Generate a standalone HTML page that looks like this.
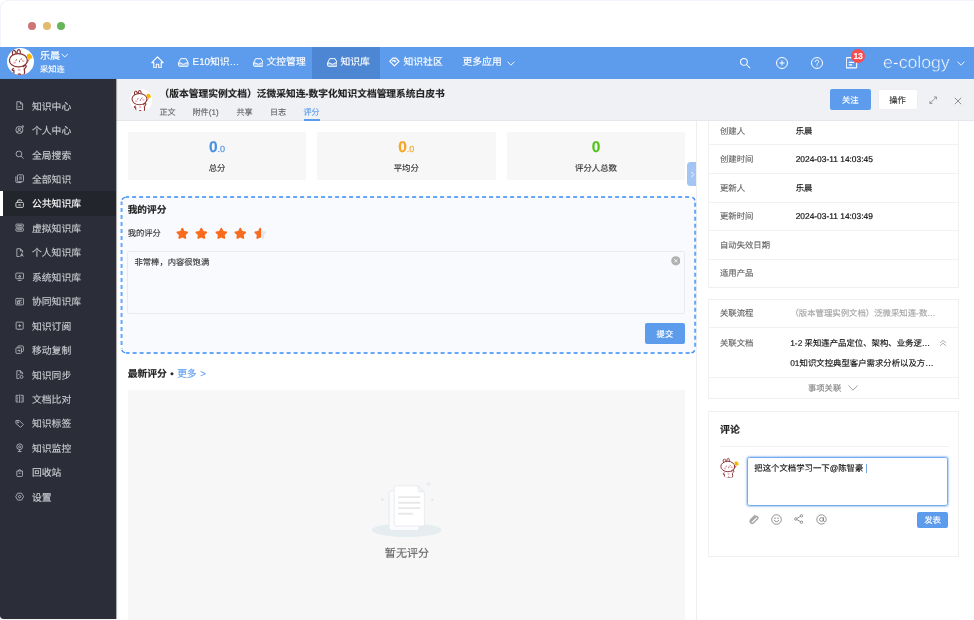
<!DOCTYPE html>
<html lang="zh-CN">
<head>
<meta charset="utf-8">
<title>知识库 - 评分</title>
<style>
*{box-sizing:border-box;margin:0;padding:0}
html,body{width:974px;height:620px;overflow:hidden;background:#fff}
body{text-rendering:geometricPrecision;-webkit-text-stroke:.14px;font-family:"Liberation Sans","Noto Sans CJK SC",sans-serif;color:#333;position:relative;font-size:8.3px;line-height:1}
.abs{position:absolute}
.t{position:absolute;white-space:nowrap;line-height:12px;height:12px;margin-top:-6px}
/* window dots */
.dot{position:absolute;width:8px;height:8px;border-radius:50%;top:21.5px}
/* header */
#hdr{position:absolute;left:0;top:47px;width:974px;height:32px;background:#5d9cec}
#hdr .t{color:#fff;font-size:9.8px}
#hdr .act{position:absolute;left:312px;top:0;width:68px;height:32px;background:#4d86d3}
/* sidebar */
#side{z-index:6;position:absolute;left:0;top:79px;width:115.6px;box-shadow:.6px 0 1px rgba(0,0,0,.35);height:540px;background:#2b2e38;border-bottom-left-radius:4px}
#side .it{position:absolute;left:0;width:116px;height:24.5px;color:#c9cbd1;font-size:9.8px}
#side .it .t{left:32px;top:14.4px}
#side .it svg{position:absolute;left:14.7px;top:7.7px;width:9.3px;height:9.3px;stroke:#c3c5cc;fill:none;stroke-width:.85}
#side .it.on{background:#23252d;color:#fff}
#side .it.on:before{content:"";position:absolute;left:0;top:0;width:3px;height:100%;background:#fff}
#side .it.on svg{stroke:#fff}
/* title bar */
#tb{z-index:5;position:absolute;left:116px;top:79px;width:858px;height:41.5px;background:#f0f1f5;border-bottom:1px solid #e6e7ec}
/* main */
.stat{position:absolute;top:132px;height:47.5px;background:#f7f7f7;border-radius:1px}
.stat .n{position:absolute;left:0;width:100%;top:7.4px;text-align:center;font-weight:bold;font-size:15.5px;line-height:18px}
.stat .n small{font-size:9px;font-weight:normal}
.stat .l{position:absolute;left:0;width:100%;top:30px;text-align:center;font-size:8.4px;line-height:12px;color:#333}
.card{position:absolute;left:708px;width:251px;background:#fff;border:1px solid #f0f0f0}
.lbl{color:#666;font-size:8.35px}
.val{color:#111;font-size:8.38px}
.num{-webkit-text-stroke:.2px #111}
.sep{position:absolute;height:1px;background:#f2f2f2}
</style>
</head>
<body>
<div id="app" style="position:absolute;left:0;top:0;width:974px;height:620px;will-change:transform">
<svg width="0" height="0" style="position:absolute"><defs><symbol id="bun" viewBox="0 0 27 27">
<clipPath id="bc"><circle cx="13.5" cy="13.5" r="13.5"/></clipPath><circle cx="13.5" cy="13.5" r="13.5" fill="#fff"/>
<g clip-path="url(#bc)"><g transform="translate(.4 .9)">
<g fill="#fff" stroke="#8a3434" stroke-width="1.25" stroke-linecap="round" stroke-linejoin="round">
<path d="M6.200 19.600c-.9.300-1.500.800-1.400 1.400.1.600.9.700 1.800.5-.2 1.600-.100 3 .300 4.300.900.500 2.500.600 3.800.200.300-.700.700-1 1.200-1 .500 0 .900.300 1.200 1 1.300.400 2.800.300 3.700-.300.500-1.700.500-3.600 0-5.600 1-.700 1.700-1.700 2.100-2.800l-1.200-1.300c-.500.900-1.100 1.500-1.900 1.900"/>
<path d="M5.600 6.600C4.600 4.200 4.900 1.900 6.200 1.600 7.500 1.300 8.500 3.200 8.900 5.300"/>
<path d="M9.600 5.100C9.400 2.800 10.200 .8 11.500 .8c1.300 0 1.700 2.200 1.300 4.500"/>
<ellipse cx="11" cy="11.300" rx="9" ry="6.700"/>
</g>
<path d="M17.600 16.700L21.900 10.300" stroke="#8a3434" stroke-width=".7" fill="none"/>
<path d="M20 5.300c1.500-1.100 3.400-.500 4.100 1l1 2.700-4.400 1.500-.9-2.400c-.4-1-.4-2.100.2-2.800z" fill="#f6b800"/>
<ellipse cx="7.200" cy="13.800" rx="1.500" ry="1.100" fill="#f9b4bb"/>
<ellipse cx="15.800" cy="12.200" rx="1.500" ry="1.100" fill="#f9b4bb"/>
<ellipse cx="11.800" cy="20.900" rx="1.300" ry="1.300" fill="#f9b4bb"/>
<path d="M8.500 11.300l.8-.4M13.400 10.500l.8-.5M12.100 12v.9" stroke="#8a3434" stroke-width=".9" stroke-linecap="round" fill="none"/>
</g>
</g>
</symbol>
<symbol id="inb" viewBox="0 0 11 9"><path d="M.6 5.100h2.700a2.300 1.700 0 0 0 4.400 0h2.700v2.300a1 1 0 0 1-1 1H1.600a1 1 0 0 1-1-1z" fill="#fff" fill-opacity=".35" stroke="none"/><path d="M2.700 .6h5.600l2.100 4.300v2.500a1 1 0 0 1-1 1H1.600a1 1 0 0 1-1-1V4.900z M.6 5h2.700a2.300 1.700 0 0 0 4.400 0h2.700" fill="none" stroke="#fff" stroke-width="1" stroke-linejoin="round"/></symbol>
<symbol id="star" viewBox="0 0 12 12"><path d="M6 .7c.35 0 .6.2.75.5l1.250 2.600 2.850.4c.7.1 1 .9.450 1.400L9.250 7.600l.5 2.850c.1.700-.6 1.200-1.200.850L6 9.950l-2.550 1.350c-.6.350-1.300-.150-1.200-.850l.5-2.850L.7 5.600c-.55-.5-.25-1.300.450-1.400L4 3.800 5.250 1.200C5.400.9 5.650.7 6 .7z"/></symbol>
</defs></svg>
<!-- window chrome -->
<div class="abs" style="left:0;top:0;width:974px;height:620px;border:1px solid #f1f4fb;border-right:0;border-bottom:0;border-radius:8px 0 0 0"></div>
<div class="dot" style="left:28px;background:#cd7476"></div>
<div class="dot" style="left:42.7px;background:#e0bb6b"></div>
<div class="dot" style="left:57.4px;background:#66b556"></div>

<!-- header -->
<div id="hdr">
  <div class="act"></div>
  <svg class="abs" style="left:7.1px;top:1.4px;width:27px;height:27px"><use href="#bun"/></svg>
  <svg class="abs" style="left:60.8px;top:5.5px;width:7.5px;height:5px" viewBox="0 0 7.500 5" fill="none" stroke="#fff" stroke-width=".9"><path d="M.5 .7L3.750 4.100 7 .7"/></svg>
  <svg class="abs" style="left:150.9px;top:8.500px;width:13px;height:12.500px" viewBox="0 0 13 12.500" fill="none" stroke="#fff" stroke-width="1.100" stroke-linejoin="round"><path d="M6.500 .8L.8 6.600H2.800V11.800H5.300V8.300H7.700V11.800H10.200V6.600H12.200Z"/></svg>
  <svg class="abs" style="left:177.800px;top:10.700px;width:10.800px;height:9px"><use href="#inb"/></svg>
  <svg class="abs" style="left:252.500px;top:10.700px;width:10.800px;height:9px"><use href="#inb"/></svg>
  <svg class="abs" style="left:326.500px;top:10.700px;width:10.800px;height:9px"><use href="#inb"/></svg>
  <svg class="abs" style="left:388.800px;top:10.300px;width:10.800px;height:9.600px" viewBox="0 0 11 10" fill="none" stroke="#fff" stroke-width="1.25" stroke-linejoin="round"><path d="M5.500 9.300L.7 4.500 3.900 1.200h3.200l3.200 3.300z"/><path d="M3.600 4.600a1.100 1.100 0 1 1 1.900.8M5.500 5.400l1.600-1.500"/></svg>
  <svg class="abs" style="left:506.500px;top:13.500px;width:8px;height:5px" viewBox="0 0 8 5" fill="none" stroke="#fff" stroke-width=".9"><path d="M.6 .7L4 4.200 7.400 .7"/></svg>
  <svg class="abs" style="left:738px;top:8.500px;width:14px;height:14px" viewBox="0 0 14 14" fill="none" stroke="#fff" stroke-width="1.05" stroke-linecap="round"><circle cx="5.900" cy="5.900" r="3.400"/><path d="M8.500 8.500L11.800 11.800"/></svg>
  <svg class="abs" style="left:775px;top:8.500px;width:14px;height:14px" viewBox="0 0 14 14" fill="none" stroke="#fff" stroke-width="1"><circle cx="7" cy="7" r="5.500"/><path d="M7 4.500v5M4.500 7h5"/></svg>
  <svg class="abs" style="left:810px;top:8.500px;width:14px;height:14px" viewBox="0 0 14 14" fill="none" stroke="#fff" stroke-width="1"><circle cx="7" cy="7" r="5.500"/><path d="M5.300 5.700a1.700 1.700 0 1 1 2.600 1.400c-.6.400-.9.700-.9 1.400" stroke-linecap="round"/><circle cx="7" cy="10" r=".6" fill="#fff" stroke="none"/></svg>
  <svg class="abs" style="left:846px;top:10px;width:12px;height:11.500px" viewBox="0 0 12 11.500" fill="none" stroke="#fff" stroke-width="1.100" stroke-linejoin="round"><path d="M1.300 .6H7.500L10.700 3.300V9.900a1 1 0 0 1-1 1H1.300a1 1 0 0 1-1-1V1.600a1 1 0 0 1 1-1z"/><path d="M2.800 5.400h5.400M2.800 7.900h3.400"/></svg>
  <div class="abs" style="left:850.700px;top:1.600px;width:14.600px;height:14.400px;border-radius:50%;background:#f74d4f"></div>
  <div class="t" style="left:850.700px;width:14.600px;text-align:center;top:8.900px;font-size:8.6px;font-weight:bold;letter-spacing:-.3px">13</div>
  <svg class="abs" style="left:956.500px;top:13.500px;width:8px;height:5px" viewBox="0 0 8 5" fill="none" stroke="#fff" stroke-width=".9"><path d="M.6 .7L4 4.200 7.400 .7"/></svg>
  <div class="t" style="left:40px;top:9.7px;font-size:10px">乐晨</div>
  <div class="t" style="left:40px;top:23.2px;font-size:8.2px">采知连</div>
  <div class="t" style="left:192.6px;top:15.6px">E10知识…</div>
  <div class="t" style="left:266.5px;top:15.6px">文控管理</div>
  <div class="t" style="left:340.5px;top:15.6px">知识库</div>
  <div class="t" style="left:403.5px;top:15.6px">知识社区</div>
  <div class="t" style="left:462.5px;top:15.6px">更多应用</div>
  <div class="t" style="left:883.3px;top:15.8px;font-size:17px;line-height:20px;height:20px;margin-top:-10px;font-weight:normal;letter-spacing:-.12px;transform:scaleX(1.052);transform-origin:0 50%;-webkit-text-stroke:.5px #5d9cec;paint-order:fill stroke">e-cology</div>
</div>

<!-- sidebar -->
<div id="side">
  <div class="it" style="top:14.25px"><svg viewBox="0 0 10 10"><path d="M2 .8h3.8L8.2 3.2v6H2z"/><path d="M5.8 .8v2.4h2.4"/><path d="M3.6 6.2h2.4"/></svg><div class="t">知识中心</div></div>
  <div class="it" style="top:38.70px"><svg viewBox="0 0 10 10"><circle cx="4.7" cy="5.3" r="3.8"/><circle cx="4.7" cy="4.4" r="1.2"/><path d="M2.2 8a2.6 2.6 0 0 1 5 0"/><circle cx="8.4" cy="1.6" r=".9"/></svg><div class="t">个人中心</div></div>
  <div class="it" style="top:63.15px"><svg viewBox="0 0 10 10"><circle cx="4.2" cy="4.2" r="3.1"/><path d="M6.5 6.5L9.2 9.2"/></svg><div class="t">全局搜索</div></div>
  <div class="it" style="top:87.60px"><svg viewBox="0 0 10 10"><rect x="2.6" y=".9" width="6.5" height="7.3" rx="1"/><path d="M.9 2.6v5.6a1 1 0 0 0 1 1h5"/><path d="M4.4 3.4h3M4.4 5.4h3"/></svg><div class="t">全部知识</div></div>
  <div class="it on" style="top:112.05px"><svg viewBox="0 0 10 10"><rect x="1" y="3.6" width="8" height="5.4" rx="1"/><path d="M2.8 3.6V2.2a1.2 1.2 0 0 1 1.2-1.2h2a1.2 1.2 0 0 1 1.2 1.2"/><path d="M3.4 6.4h3.2"/></svg><div class="t">公共知识库</div></div>
  <div class="it" style="top:136.50px"><svg viewBox="0 0 10 10"><rect x="1" y="1.2" width="8" height="3.2" rx=".8"/><rect x="1" y="5.6" width="8" height="3.2" rx=".8"/><path d="M2.5 2.8h5M2.5 7.2h5"/></svg><div class="t">虚拟知识库</div></div>
  <div class="it" style="top:160.95px"><svg viewBox="0 0 10 10"><path d="M5 9.2H2V.8h3.8L8.2 3.2V5"/><path d="M5.8 .8v2.4h2.4"/><path d="M5.8 9.2L7.3 5.8 8.8 9.2M6.3 8.2h2"/></svg><div class="t">个人知识库</div></div>
  <div class="it" style="top:185.40px"><svg viewBox="0 0 10 10"><rect x=".9" y="1.2" width="8.2" height="6" rx=".6"/><path d="M3 9.2h4"/><path d="M5 3.2L6.3 5.4H3.7z"/></svg><div class="t">系统知识库</div></div>
  <div class="it" style="top:209.85px"><svg viewBox="0 0 10 10"><rect x=".9" y="1.5" width="8.2" height="7" rx=".7"/><path d="M2.8 3.6h4.6"/><rect x="2.8" y="5" width="2.4" height="1.8"/><path d="M6.6 6.2h.9"/></svg><div class="t">协同知识库</div></div>
  <div class="it" style="top:234.30px"><svg viewBox="0 0 10 10"><rect x="1.2" y="1.2" width="7.6" height="7.6" rx=".7"/><path d="M5 3.4v3.2M3.4 5h3.2"/><path d="M4 8.8v.6M6 8.8v.6"/></svg><div class="t">知识订阅</div></div>
  <div class="it" style="top:258.75px"><svg viewBox="0 0 10 10"><rect x="1" y="3" width="6" height="6" rx=".9"/><path d="M3 3V1.9a.9.9 0 0 1 .9-.9h4.2a.9.9 0 0 1 .9.9v4.2a.9.9 0 0 1-.9.9H7"/><path d="M2.8 6h2.6M4.4 4.9L5.5 6 4.4 7.1"/></svg><div class="t">移动复制</div></div>
  <div class="it" style="top:283.20px"><svg viewBox="0 0 10 10"><path d="M4.6 9.2H2V.8h3.8L8.2 3.2V4.6"/><path d="M5.8 .8v2.4h2.4"/><circle cx="7" cy="7.4" r="1.6"/><path d="M3.4 5h1.6"/></svg><div class="t">知识同步</div></div>
  <div class="it" style="top:307.65px"><svg viewBox="0 0 10 10"><path d="M3.8 1.4H1.2v7.2h2.6M6.2 1.4h2.6v7.2H6.2M5 .4v9.2"/><path d="M2.2 3.4h1M2.2 5h1M2.2 6.6h1M7 3.4h1M7 5h1M7 6.6h1" stroke-width=".8"/></svg><div class="t">文档比对</div></div>
  <div class="it" style="top:332.10px"><svg viewBox="0 0 10 10"><path d="M1 1.6h3.6L9 6 6 9 1 4.8z"/><circle cx="3.2" cy="3.6" r=".7"/></svg><div class="t">知识标签</div></div>
  <div class="it" style="top:356.55px"><svg viewBox="0 0 10 10"><circle cx="5" cy="4" r="3.1"/><circle cx="5" cy="4" r="1.1"/><path d="M5 7.1v2.1M3 9.2h4"/></svg><div class="t">知识监控</div></div>
  <div class="it" style="top:381.00px"><svg viewBox="0 0 10 10"><path d="M2 3.2h6v5a1 1 0 0 1-1 1H3a1 1 0 0 1-1-1z"/><path d="M3.6 3.2a1.4 1.4 0 0 1 2.8 0"/><path d="M4 5.6h2"/></svg><div class="t">回收站</div></div>
  <div class="it" style="top:405.45px"><svg viewBox="0 0 10 10"><path d="M.8 5L2.9 1.3h4.2L9.2 5 7.1 8.7H2.9z"/><circle cx="5" cy="5" r="1.3"/></svg><div class="t">设置</div></div>
</div>

<!-- title bar -->
<div id="tb">
  <svg class="abs" style="left:14.1px;top:9.800px;width:22.4px;height:22.4px"><use href="#bun"/></svg>
  <svg class="abs" style="left:813.2px;top:17.300px;width:8.4px;height:8.4px" viewBox="0 0 9 9" fill="none" stroke="#777" stroke-width=".75"><path d="M1 8L8 1M5.300 1H8v2.700M1 5.300V8h2.700"/></svg>
  <svg class="abs" style="left:838.200px;top:17.500px;width:8px;height:8px" viewBox="0 0 8 8" fill="none" stroke="#777" stroke-width=".8"><path d="M.8 .8L7.200 7.200M7.200 .8L.8 7.200"/></svg>
  <div class="t" style="left:43.6px;top:16px;font-size:9.73px;font-weight:bold;color:#222">（版本管理实例文档）泛微采知连-数字化知识文档管理系统白皮书</div>
  <div class="t" style="left:43.5px;top:34px;font-size:8.1px;color:#666">正文</div>
  <div class="t" style="left:76.5px;top:34px;font-size:8.1px;color:#666">附件(1)</div>
  <div class="t" style="left:120.5px;top:34px;font-size:8.1px;color:#666">共享</div>
  <div class="t" style="left:154px;top:34px;font-size:8.1px;color:#666">日志</div>
  <div class="t" style="left:187.5px;top:34px;font-size:8.1px;color:#5d9cec">评分</div>
  <div class="abs" style="left:187.5px;top:40.4px;width:16.5px;height:1.6px;background:#5d9cec"></div>
  <div class="abs" style="left:714px;top:10.2px;width:40.5px;height:21px;background:#5d9cec;border-radius:2px"></div>
  <div class="t" style="left:714px;width:40.5px;text-align:center;top:20.8px;color:#fff;font-size:8.3px">关注</div>
  <div class="abs" style="left:761.5px;top:10.2px;width:40px;height:21px;background:#fff;border:1px solid #eceef2;border-radius:2px"></div>
  <div class="t" style="left:761.5px;width:40px;text-align:center;top:20.8px;color:#333;font-size:8.3px">操作</div>
</div>

<!-- main left -->
<div class="abs" style="left:696px;top:121px;width:1px;height:499px;background:#efefef"></div>
<div class="stat" style="left:128px;width:178px"><div class="n" style="color:#4a90e2">0<small>.0</small></div><div class="l">总分</div></div>
<div class="stat" style="left:317px;width:178.5px"><div class="n" style="color:#f5a623">0<small>.0</small></div><div class="l">平均分</div></div>
<div class="stat" style="left:507px;width:178px"><div class="n" style="color:#52c41a">0</div><div class="l">评分人总数</div></div>

<div class="abs" style="left:687px;top:162.2px;width:9.2px;height:23.8px;background:#a3c5f3;border-radius:3.5px 0 0 3.5px"></div>

<svg class="abs" style="left:119.5px;top:195px;width:577px;height:160px" viewBox="119.5 195 577 160" fill="none">
<rect x="121.05" y="197.06" width="573.60" height="155.94" rx="4.5" fill="#f9fafd"/>
<g stroke="#65a8f8" stroke-width="2" stroke-dasharray="4 3">
<path d="M125.55 197.06H690.15" stroke-dashoffset=".95"/>
<path d="M125.55 353.0H690.15" stroke-dashoffset=".45"/>
<path d="M121.05 201.56V348.5" stroke-dashoffset=".53"/>
<path d="M694.65 201.56V348.5" stroke-dashoffset="5.86"/>
</g>
<g stroke="#3f8aec" stroke-width="1.400">
<path d="M121.47 199.66A4.5 4.5 0 0 1 125.16 197.08"/>
<path d="M691.84 197.39A4.5 4.5 0 0 1 694.50 200.40"/>
<path d="M694.23 350.40A4.5 4.5 0 0 1 690.93 352.93"/>
<path d="M124.77 352.93A4.5 4.5 0 0 1 121.32 350.04"/>
</g>
</svg>
<div class="t" style="left:127.7px;top:210.5px;font-size:9.7px;font-weight:bold;color:#222">我的评分</div>
<div class="t" style="left:127.7px;top:232.7px;font-size:8.3px;color:#333">我的评分</div>
<div class="abs" style="left:127.3px;top:251px;width:558px;height:62.7px;border:1px solid #e8eaf0;border-radius:2.5px;background:#f9fafd"></div>
<div class="t" style="left:134.5px;top:261.7px;font-size:8.3px;color:#333">非常棒，内容很饱满</div>
<div class="abs" style="left:644.8px;top:323.3px;width:40.2px;height:20.6px;background:#5d9cec;border-radius:2px"></div>
<div class="t" style="left:644.8px;width:40.2px;text-align:center;top:333.6px;color:#fff;font-size:8.3px">提交</div>

<div class="t" style="left:127.7px;top:374.5px;font-size:9.75px;word-spacing:.8px;font-weight:bold;color:#222">最新评分 • <span style="color:#5d9cec;font-weight:normal">更多 &gt;</span></div>
<div class="abs" style="left:128px;top:390px;width:557px;height:230px;background:#f7f7f7"></div>
<div class="t" style="left:357px;width:100px;text-align:center;top:554.3px;font-size:11.1px;color:#666;line-height:14px;height:14px;margin-top:-7px">暂无评分</div>

<svg class="abs" style="left:175.80px;top:226.700px;width:12.600px;height:12.600px" fill="#f96b1d"><use href="#star"/></svg>
<svg class="abs" style="left:195.35px;top:226.700px;width:12.600px;height:12.600px" fill="#f96b1d"><use href="#star"/></svg>
<svg class="abs" style="left:214.90px;top:226.700px;width:12.600px;height:12.600px" fill="#f96b1d"><use href="#star"/></svg>
<svg class="abs" style="left:234.45px;top:226.700px;width:12.600px;height:12.600px" fill="#f96b1d"><use href="#star"/></svg>
<svg class="abs" style="left:254.00px;top:226.700px;width:12.600px;height:12.600px" fill="#e3e5ea"><use href="#star"/></svg>
<svg class="abs" style="left:254.000px;top:226.700px;width:6.510px;height:12.600px;overflow:hidden" viewBox="0 0 6.200 12" fill="#f96b1d"><path d="M6 .7c.35 0 .6.2.75.5l1.250 2.600 2.850.4c.7.1 1 .9.450 1.400L9.250 7.600l.5 2.850c.1.700-.6 1.200-1.200.850L6 9.950l-2.550 1.350c-.6.350-1.300-.150-1.200-.850l.5-2.850L.7 5.600c-.55-.5-.25-1.300.450-1.400L4 3.800 5.250 1.200C5.400.9 5.650.7 6 .7z"/></svg>
<svg class="abs" style="left:670.500px;top:256.200px;width:9.600px;height:9.600px" viewBox="0 0 10 10"><circle cx="5" cy="5" r="4.800" fill="#b0b0b0"/><path d="M3.300 3.300L6.700 6.700M6.700 3.300L3.300 6.700" stroke="#fff" stroke-width=".9" fill="none"/></svg>
<svg class="abs" style="left:689.500px;top:170.500px;width:5px;height:7px" viewBox="0 0 5 7" fill="none" stroke="#fff" stroke-width=".8"><path d="M1.200 .8L3.800 3.500 1.200 6.200"/></svg>
<svg class="abs" style="left:370px;top:478px;width:74px;height:62px" viewBox="0 0 74 62">
<ellipse cx="36.700" cy="52.100" rx="34.900" ry="7" fill="#e5edf0"/>
<rect x="19.100" y="12.900" width="29.900" height="39.500" rx="2.500" fill="#fbfcfd" stroke="#e3e7ee" stroke-width=".8"/>
<path d="M26.200 7.800H48.100L54.400 14V46.100a2 2 0 0 1-2 2H26.200a2 2 0 0 1-2-2V9.800a2 2 0 0 1 2-2z" fill="#fff" stroke="#e3e7ee" stroke-width=".8"/>
<path d="M48.100 7.800V12.500a1.500 1.500 0 0 0 1.500 1.500H54.400z" fill="#f3f5f8" stroke="#e3e7ee" stroke-width=".7" stroke-linejoin="round"/>
<path d="M29 19.100H49.600M29 24.700H49.600M29 30.100H49.600M29 35.700H42.300" stroke="#e8e8e8" stroke-width="1.900" stroke-linecap="round" fill="none"/>
<path d="M58.600 3.400v5M56.100 5.900h5M12.400 19.600v3.600M10.600 21.400h3.600M62.300 20v3.200M60.700 21.600h3.200" stroke="#dfe3ea" stroke-width=".7" fill="none"/>
</svg>
<!-- right -->
<div class="card" id="c1" style="top:115px;height:172.5px">
  <div class="t lbl" style="left:11px;top:14.5px">创建人</div>
  <div class="t val" style="left:86.7px;top:14.5px">乐晨</div>
  <div class="sep" style="left:0;width:249px;top:28.3px"></div>
  <div class="t lbl" style="left:11px;top:43.1px">创建时间</div>
  <div class="t val num" style="left:86.7px;top:43.1px">2024-03-11 14:03:45</div>
  <div class="sep" style="left:0;width:249px;top:57.0px"></div>
  <div class="t lbl" style="left:11px;top:71.6px">更新人</div>
  <div class="t val" style="left:86.7px;top:71.6px">乐晨</div>
  <div class="sep" style="left:0;width:249px;top:85.6px"></div>
  <div class="t lbl" style="left:11px;top:100.2px">更新时间</div>
  <div class="t val num" style="left:86.7px;top:100.2px">2024-03-11 14:03:49</div>
  <div class="sep" style="left:0;width:249px;top:114.2px"></div>
  <div class="t lbl" style="left:11px;top:128.7px">自动失效日期</div>
  <div class="sep" style="left:0;width:249px;top:142.9px"></div>
  <div class="t lbl" style="left:11px;top:157.2px">适用产品</div>
</div>
<div class="card" id="c2" style="top:299px;height:100px">
  <div class="t lbl" style="left:11px;top:13.1px">关联流程</div>
  <div class="t" style="left:81.5px;top:13.1px;color:#a6a6a6;font-size:8.38px">（版本管理实例文档）泛微采知连-数…</div>
  <div class="sep" style="left:0;width:249px;top:27.2px"></div>
  <div class="t lbl" style="left:11px;top:42.5px">关联文档</div>
  <div class="t val" style="left:81.2px;top:42.5px">1-2 采知连产品定位、架构、业务逻…</div>
  <svg class="abs" style="left:229.8px;top:38.5px;width:8px;height:8px" viewBox="0 0 8 8" fill="none" stroke="#999" stroke-width=".8"><path d="M1 4L4 1.4 7 4M1 6.8L4 4.2 7 6.8"/></svg>
  <div class="t val" style="left:81.2px;top:63.3px">01知识文控典型客户需求分析以及方…</div>
  <div class="sep" style="left:0;width:249px;top:77.4px"></div>
  <div class="t" style="left:99px;top:87.8px;color:#888;font-size:8.3px">事项关联</div>
  <svg class="abs" style="left:137.5px;top:84px;width:12px;height:8px" viewBox="0 0 12 8" fill="none" stroke="#888" stroke-width=".8"><path d="M1.5 1.5L6 6.2 10.5 1.5"/></svg>
</div>
<div class="card" id="c3" style="top:410.5px;height:146px">
  <div class="t" style="left:11px;top:19.6px;font-size:9.9px;font-weight:bold;color:#222">评论</div>
  <div class="sep" style="left:11px;width:228.5px;top:34px"></div>
  <div class="abs" style="left:38.1px;top:45.4px;width:201.3px;height:49.6px;border:1px solid #76abf0;border-radius:2.5px;box-shadow:0 0 1.5px 1px rgba(93,156,236,.45)"></div>
  <div class="t val" style="left:45.3px;top:56.5px">把这个文档学习一下@陈智豪</div>
  <div class="abs" style="left:157px;top:52px;width:1px;height:9.5px;background:#7aa9ea"></div>
  <svg class="abs" style="left:10.300px;top:45.300px;width:21px;height:21px"><use href="#bun"/></svg>
  <svg class="abs" style="left:39.500px;top:102.700px;width:10px;height:10px" viewBox="0 0 10 10" fill="none" stroke="#a8a8a8" stroke-width="1.500" stroke-linecap="round"><path d="M2 7.500L6.300 3.200a1.300 1.300 0 0 1 1.900 1.900L4.300 9a2 2 0 0 1-2.900-2.900L5.600 1.900" transform="translate(.3 -.3)"/></svg>
  <svg class="abs" style="left:61.600px;top:102.200px;width:11px;height:11px" viewBox="0 0 11 11" fill="none" stroke="#777" stroke-width=".8"><circle cx="5.500" cy="5.500" r="4.800"/><path d="M3.300 6.300a2.400 2.400 0 0 0 4.400 0M3.500 4.200h1M6.500 4.200h1" stroke-linecap="round"/></svg>
  <svg class="abs" style="left:84.500px;top:102.700px;width:10px;height:10px" viewBox="0 0 10 10" fill="none" stroke="#777" stroke-width=".8"><circle cx="7.500" cy="1.800" r="1.200"/><circle cx="7.500" cy="8.200" r="1.200"/><circle cx="1.800" cy="5" r="1.200"/><path d="M2.900 4.400L6.400 2.400M2.900 5.600L6.400 7.600"/></svg>
  <svg class="abs" style="left:106.500px;top:102.200px;width:11px;height:11px" viewBox="0 0 11 11" fill="none" stroke="#777" stroke-width=".8"><circle cx="5.500" cy="5.500" r="1.900"/><path d="M7.400 3.600v2.600a1.400 1.400 0 0 0 2.800 0V5.500a4.700 4.700 0 1 0-1.800 3.700" stroke-linecap="round"/></svg>
  <div class="abs" style="left:207.7px;top:100.3px;width:31.5px;height:16.4px;background:#5d9cec;border-radius:2px"></div>
  <div class="t" style="left:207.7px;width:31.5px;text-align:center;top:108.5px;color:#fff;font-size:8.3px">发表</div>
</div>

</div>
</body>
</html>
